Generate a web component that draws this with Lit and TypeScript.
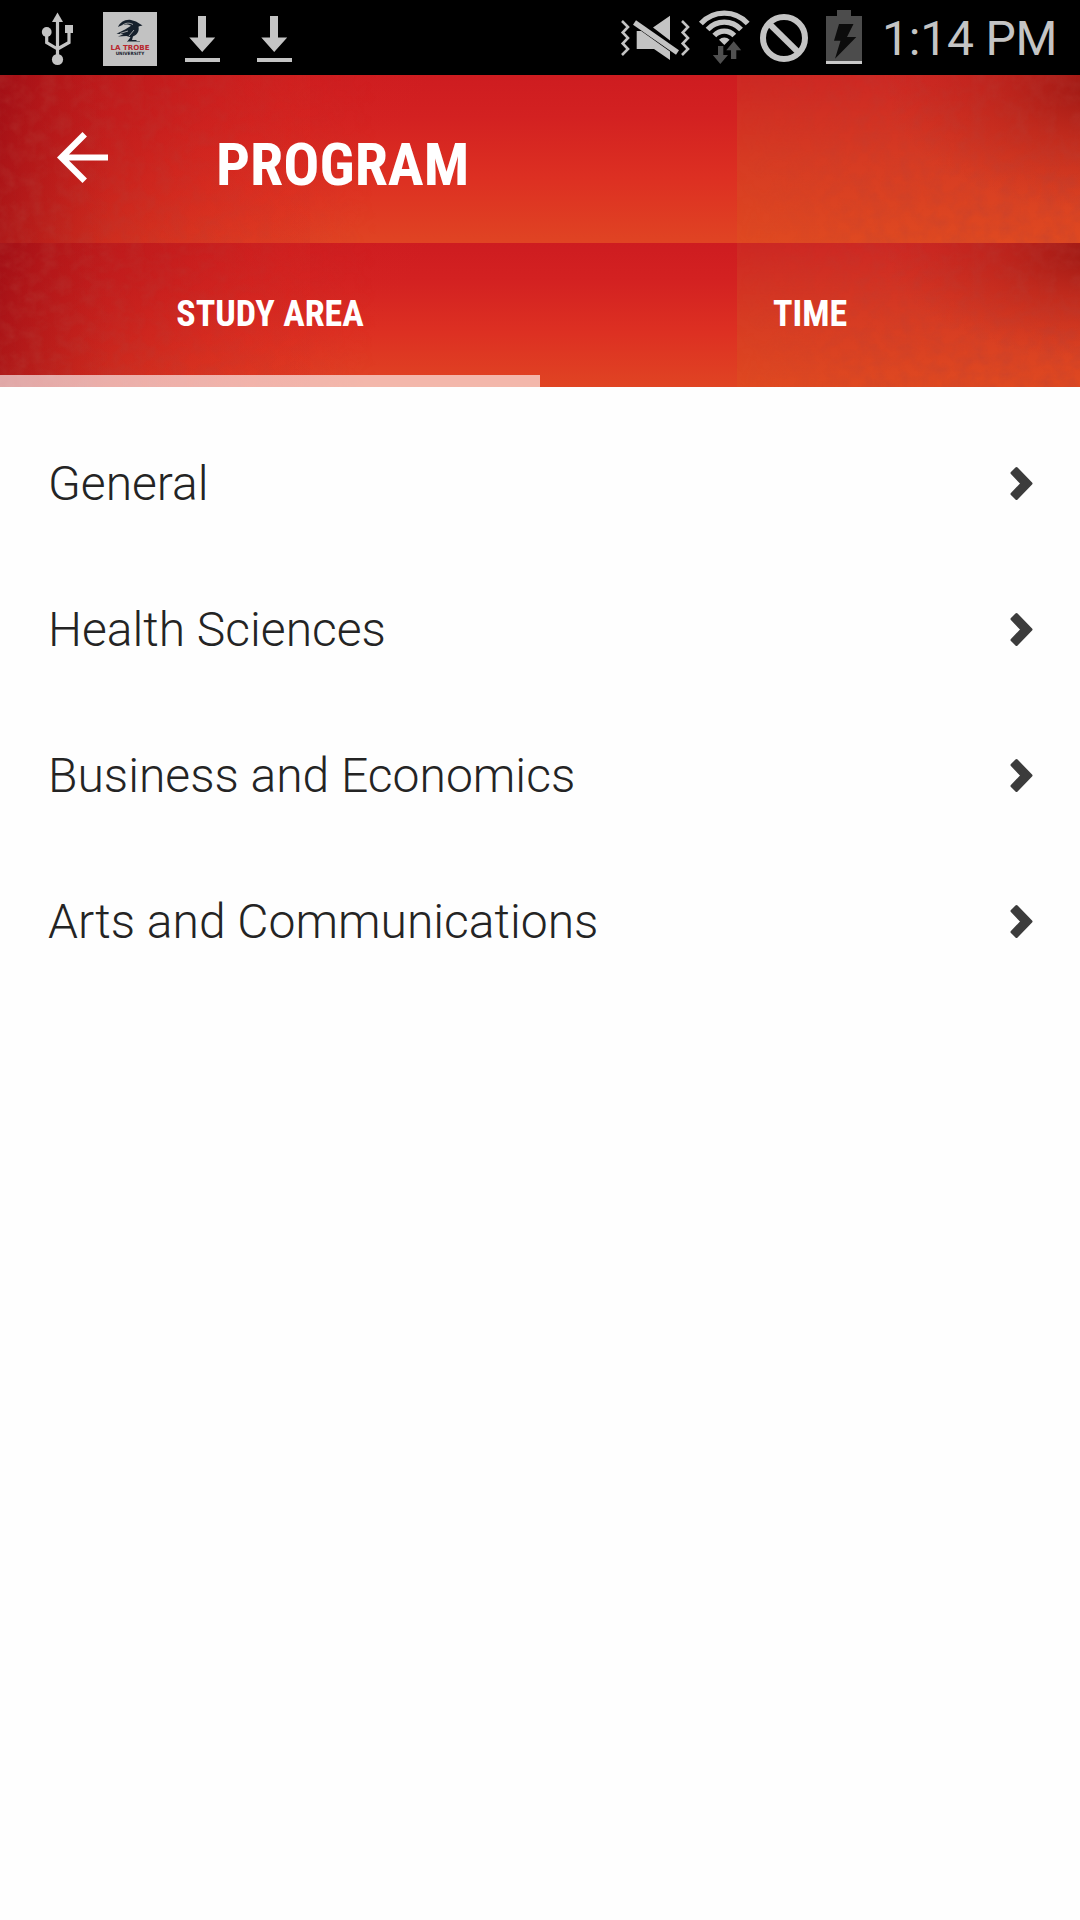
import { LitElement, html, css, svg } from "lit";
import { customElement, property, state } from "lit/decorators.js";

@customElement("status-bar")
class StatusBar extends LitElement {
  static styles = css`
    :host { display: block; }
    .bar {
      display: flex; justify-content: space-between; height: 75px; background: #000;
      padding: 0 24px 0 40px; box-sizing: border-box; color: #c4c4c4;
    }
    .group { display: flex; }
    svg { display: block; height: 75px; flex: none; }
    .time { font: 400 48px/78px Roboto, sans-serif; letter-spacing: -.2px; white-space: nowrap; margin-left: 14px; width: 174px; }
    .brand { font: 700 7px "DejaVu Sans", sans-serif; fill: #b8262c; }
    .brand-sub { font: 700 4.4px "DejaVu Sans", sans-serif; fill: #16202c; }
  `;

  private download(x: number) {
    return svg`<svg width="35" viewBox="${x} 0 35 75" fill="#c4c4c4">
      <path transform="translate(${x - 185} 0)" d="M198 16h8v21.500h9.200L202.200 52 189.300 37.500h8.700zM185 58h35v4h-35z"/></svg>`;
  }

  render() {
    return html`
      <div class="bar">
        <div class="group">
          <svg width="63" viewBox="40 0 63 75" fill="#c4c4c4">
            <path d="M57.500 12.500l5.500 9.500h-11z"/>
            <circle cx="57.500" cy="59.500" r="5.600"/><circle cx="46.700" cy="32" r="4.900"/>
            <path d="M65 25h8v8h-8z"/>
            <path d="M57.500 20v38M46.700 33v9.500l10.800 6.500M69 30v12.500l-11.500 6.500" fill="none" stroke="#c4c4c4" stroke-width="3.200"/>
          </svg>
          <svg width="82" viewBox="103 0 82 75">
            <path fill="#c2c2c2" d="M103 12h54v54h-54z"/>
            <path fill="#16202c" d="M118 27c2-4.500 7-8 13-7l5 1.500 6.500 4c-1.500.5-3 .3-4 1.200 1 5-1.500 7.800-5.500 9.800l-1 3.500h4.500v1.200h-9l3-4-4-1.200-8.500.5 5.500-2.200-7-.5 9-4.500 5.500-3.500c-4-2.500-8.500-1.300-13 1.200z"/>
            <path d="M121.500 26c4-3.500 8-3.500 11.500-1.500M120 33.500l8-2.500M129 36l5-6" fill="none" stroke="#c2c2c2" stroke-width=".8"/>
            <path d="M127 41.500h13" stroke="#6d7478" stroke-width="1"/>
            <text class="brand" x="110.500" y="50" textLength="39" lengthAdjust="spacingAndGlyphs">LA TROBE</text>
            <text class="brand-sub" x="115.700" y="55" textLength="28.500" lengthAdjust="spacingAndGlyphs">UNIVERSITY</text>
          </svg>
          ${this.download(185)}
          <svg width="37" viewBox="0 0 37 75"></svg>
          ${this.download(257)}
        </div>
        <div class="group">
          <svg width="76" viewBox="620 0 76 75" fill="#c4c4c4">
            <path d="M670 15.700V40.500L653 27.500zM636.700 31h4.500L670 51.500V60L654 49h-17.300z"/>
            <path d="M634.500 22.500L677.500 52.500" stroke="#c4c4c4" stroke-width="5.200"/>
            <path d="M622 21l6 6-5.300 5.500 5.300 5.500-5.300 5.500 5.300 5.500-6 6M682 21l6 6-5.300 5.500 5.300 5.500-5.300 5.500 5.300 5.500-6 6" fill="none" stroke="#c4c4c4" stroke-width="2.600"/>
          </svg>
          <svg width="62" viewBox="696 0 62 75">
            <g fill="none" stroke="#c4c4c4" stroke-width="5.200">
              <path d="M700.900 23.500A31.500 31.500 0 0 1 747.700 23.500"/>
              <path d="M707.600 29.500A22.500 22.500 0 0 1 741 29.500"/>
              <path d="M714.300 35.600A13.500 13.500 0 0 1 734.300 35.600"/>
            </g>
            <path fill="#c4c4c4" d="M719 39.800a7.500 7.500 0 0 1 10.600 0l-5.300 5.200z"/>
            <path fill="#505050" d="M718 46h5.300v9h4.700l-7.700 9-7.500-9h5.200zM733.700 41.300l7.500 9h-4.900V59h-5.300v-8.700h-4.700z"/>
          </svg>
          <svg width="64" viewBox="758 0 64 75" fill="none" stroke="#c4c4c4" stroke-width="6">
            <circle cx="784" cy="38" r="21"/><path d="M769 23.500l30 29.500"/>
          </svg>
          <svg width="46" viewBox="822 0 46 75">
            <path fill="#4c4c4c" d="M837 10h14v6h11v45h-36V16h11z"/>
            <path fill="#c8c8c8" d="M826 61h36v3h-36z"/>
            <path fill="#0c0c0c" d="M839 24h14.500L847 37h9.300L835 58.700 840.500 40.700H834z"/>
          </svg>
          <span class="time">1:14 PM</span>
        </div>
      </div>`;
  }
}

@customElement("fire-backdrop")
class FireBackdrop extends LitElement {
  static styles = css`
    :host { display: block; width: 100%; height: 100%; }
    svg { display: block; width: 100%; height: 100%; }
  `;
  render() {
    return html`
      <svg viewBox="0 0 1080 168" preserveAspectRatio="none">
        <defs>
          <linearGradient id="base" x2="0" y2="1">
            <stop offset="0" stop-color="#ce1c20"/><stop offset=".25" stop-color="#d32121"/>
            <stop offset=".62" stop-color="#dd3022"/><stop offset="1" stop-color="#e04423"/>
          </linearGradient>
          <linearGradient id="right" x2="0" y2="1">
            <stop offset="0" stop-color="#cd2823"/><stop offset=".5" stop-color="#d63b23"/><stop offset="1" stop-color="#df4921"/>
          </linearGradient>
          <linearGradient id="shade" gradientUnits="userSpaceOnUse" x1="0" y1="0" x2="350" y2="170">
            <stop offset="0" stop-color="#9e0e15" stop-opacity=".82"/><stop offset=".12" stop-color="#ab1417" stop-opacity=".68"/>
            <stop offset=".4" stop-color="#b81a1a" stop-opacity=".5"/><stop offset=".7" stop-color="#cc221d" stop-opacity=".25"/><stop offset="1" stop-color="#d82820" stop-opacity="0"/>
          </linearGradient>
          <linearGradient id="edge"><stop offset="0" stop-color="#9e0e15" stop-opacity=".5"/><stop offset="1" stop-color="#b01818" stop-opacity="0"/></linearGradient>
          <linearGradient id="cool"><stop offset="0" stop-color="#d62820" stop-opacity=".3"/><stop offset="1" stop-color="#dc2c20" stop-opacity=".2"/></linearGradient>
          <radialGradient id="corner" gradientUnits="userSpaceOnUse" cx="0" cy="0" r="1" gradientTransform="translate(1095 10) scale(210 125)">
            <stop offset="0" stop-color="#951510" stop-opacity=".85"/><stop offset=".45" stop-color="#a51b14" stop-opacity=".4"/><stop offset="1" stop-color="#b81e18" stop-opacity="0"/>
          </radialGradient>
          <linearGradient id="fade">
            <stop offset="0" stop-color="#aaa"/><stop offset=".18" stop-color="#666"/><stop offset=".35" stop-color="#000"/>
            <stop offset=".68" stop-color="#000"/><stop offset=".8" stop-color="#666"/><stop offset="1" stop-color="#999"/>
          </linearGradient>
          <mask id="grainmask"><rect width="1080" height="168" fill="url(#fade)"/></mask>
          <filter id="grain" x="0" y="0" width="1" height="1">
            <feTurbulence type="fractalNoise" baseFrequency=".07" numOctaves="3" seed="4"/>
            <feColorMatrix values="0 0 0 0 .45  0 0 0 0 .05  0 0 0 0 .04  1 0 0 0 -.35"/>
          </filter>
        </defs>
        <rect width="1080" height="168" fill="url(#base)"/>
        <rect width="310" height="168" fill="url(#cool)"/>
        <rect width="450" height="168" fill="url(#shade)"/>
        <rect width="110" height="168" fill="url(#edge)"/>
        <rect x="737" width="343" height="168" fill="url(#right)"/>
        <rect x="737" width="343" height="168" fill="url(#corner)"/>
        <g mask="url(#grainmask)"><rect width="1080" height="168" filter="url(#grain)"/></g>
      </svg>`;
  }
}

@customElement("area-row")
class AreaRow extends LitElement {
  @property() label = "";
  static styles = css`
    :host { display: block; }
    .row { display: flex; align-items: center; justify-content: space-between; height: 146px; padding: 0 47px 0 48px; box-sizing: border-box; }
    .label { font: 300 48px/56px Roboto, sans-serif; color: #242424; white-space: nowrap; }
    svg { display: block; }
  `;
  render() {
    return html`<div class="row">
      <span class="label">${this.label}</span>
      <svg width="23" height="34" viewBox="0 0 23 34"><path fill="#3c3c3c" stroke="#3c3c3c" stroke-width="3" stroke-linejoin="round" d="M2 6L6.500 1.600 21 16.500 6.500 31.400 2 27 12 16.500z"/></svg>
    </div>`;
  }
}

@customElement("app-root")
class AppRoot extends LitElement {
  @state() private active = 0;
  private tabs = ["STUDY AREA", "TIME"];
  private areas = ["General", "Health Sciences", "Business and Economics", "Arts and Communications"];

  static styles = css`
    :host { display: block; width: 1080px; height: 1920px; background: #fefefe; overflow: hidden; }
    .layered { display: grid; }
    .layered > * { grid-area: 1 / 1; min-width: 0; min-height: 0; }
    .toolbar { height: 168px; }
    .tabbar { height: 144px; }
    .title { display: flex; align-items: center; padding-left: 57px; color: #fff; }
    .title svg { display: block; margin-bottom: 3px; }
    .title h1 { margin: 11px 0 0 108px; font: 700 60px/70px "Roboto Condensed", Roboto, sans-serif; font-stretch: 75%; white-space: nowrap; }
    .tabs { display: grid; grid-template-columns: 1fr 1fr; }
    .tab {
      border: 0; background: none; color: #fff; padding: 10px 0 0; border-bottom: 12px solid transparent;
      font: 700 36px/42px "Roboto Condensed", Roboto, sans-serif; font-stretch: 75%;
    }
    .tab.on { border-bottom-color: rgba(255, 255, 255, .62); }
    .list { padding-top: 24px; }
  `;

  render() {
    return html`
      <status-bar></status-bar>
      <header class="layered toolbar">
        <fire-backdrop></fire-backdrop>
        <div class="title">
          <svg width="51" height="51" viewBox="4 4 16 16" fill="#fff"><path d="M20 11.050H7.750l5.650-5.640L12 4l-8 8 8 8 1.400-1.410L7.750 12.950H20z"/></svg>
          <h1>PROGRAM</h1>
        </div>
      </header>
      <nav class="layered tabbar">
        <fire-backdrop></fire-backdrop>
        <div class="tabs">
          ${this.tabs.map((t, i) => html`<button class="tab ${i === this.active ? "on" : ""}" @click=${() => (this.active = i)}>${t}</button>`)}
        </div>
      </nav>
      <main class="list">${this.areas.map((a) => html`<area-row label=${a}></area-row>`)}</main>`;
  }
}
